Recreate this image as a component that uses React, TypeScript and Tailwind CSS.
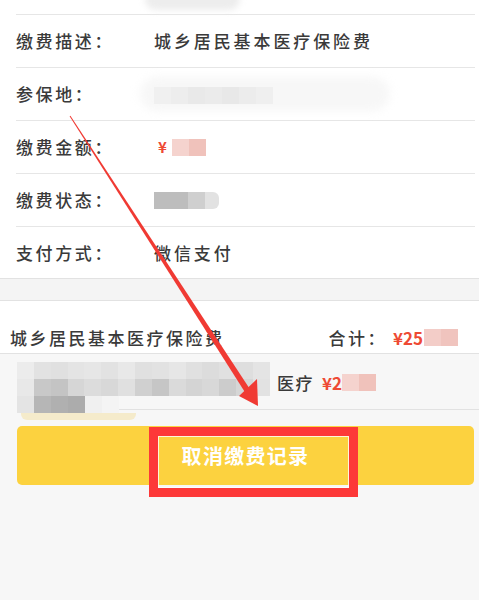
import React from 'react';

const font = { fontFamily: '"Noto Sans CJK SC", "Noto Sans", sans-serif' };

// blurred mosaic cells used to hide personal data in the screenshot
const itemMosaic = [
  ['#ececec', '#e2e2e2', '#e0e0e0', '#e4e4e4', '#e6e6e6', '#e2e2e2', '#e8e8e8', '#e0e0e0', '#e2e2e2', '#e6e6e6', '#e0e0e0', '#dcdcdc', '#e0e0e0', '#dedede', '#e4e4e4'],
  ['#e8e8e8', '#c8c8c8', '#c4c4c4', '#d6d6d6', '#dcdcdc', '#d8d8d8', '#e0e0e0', '#d0d0d0', '#c6c6c6', '#dadada', '#d4d4d4', '#d8d8d8', '#cccccc', '#d6d6d6', '#e2e2e2'],
  ['#e4e4e4', '#b6b6b6', '#b0b0b0', '#acacac', '#f0f0f0', '#f4f4f4'],
];

function Cells({ colors, className = '' }: { colors: string[]; className?: string }) {
  return (
    <div className={`flex ${className}`}>
      {colors.map((c, i) => (
        <div key={i} className="h-[17px] w-[17px]" style={{ backgroundColor: c }} />
      ))}
    </div>
  );
}

function Row({ label, children, last }: { label: string; children: React.ReactNode; last?: boolean }) {
  return (
    <div className={`flex items-center ${last ? 'h-[51px]' : 'h-[53px] border-b border-[#e6e6e6]'}`}>
      <span className="w-[138px] text-[17px] font-medium tracking-[2.6px] text-[#3a3a3a]">{label}</span>
      {children}
    </div>
  );
}

function Arrow() {
  return (
    <svg className="pointer-events-none absolute left-0 top-0" width="479" height="600" viewBox="0 0 479 600">
      <polygon points="69.6,116.3 70.4,115.7 249.5,388.4 244.5,391.6" fill="#f03a33" />
      <polygon points="239,396 257,379 258,406" fill="#f03a33" />
    </svg>
  );
}

export default function App() {
  return (
    <div className="relative h-[600px] w-[479px] overflow-hidden bg-[#f7f7f7]" style={font}>
      {/* detail list */}
      <div className="relative border-b border-[#e2e2e2] bg-white pl-4 pr-[4px]">
        <div className="absolute left-[145px] top-[-12px] h-[22px] w-[95px] rounded-full bg-[#ededed] blur-[3px]" />
        <div className="h-[15px] border-b border-[#e6e6e6]" />
        <Row label="缴费描述：">
          <span className="text-[17px] font-medium tracking-[2.9px] text-[#3a3a3a]">城乡居民基本医疗保险费</span>
        </Row>
        <Row label="参保地：">
          <div className="relative">
            <div className="absolute left-[-14px] top-[-8px] h-[34px] w-[250px] rounded-full bg-[#f7f7f7] blur-[4px]" />
            <Cells className="relative mt-[2px] rounded-[3px]" colors={['#f0f0f0', '#ededed', '#e9e9e9', '#ebebeb', '#e8e8e8', '#ececec', '#efefef']} />
          </div>
        </Row>
        <Row label="缴费金额：">
          <span className="ml-[4px] text-[15px] font-bold text-[#ee4a34]">¥</span>
          <Cells className="ml-[5px]" colors={['#f5d3ce', '#f0c2bb']} />
        </Row>
        <Row label="缴费状态：">
          <div className="flex">
            <div className="h-[17px] w-[34px] bg-[#bdbdbd]" />
            <div className="h-[17px] w-[17px] bg-[#cfcfcf]" />
            <div className="h-[17px] w-[14px] rounded-r-[6px] bg-[#e2e2e2]" />
          </div>
        </Row>
        <Row label="支付方式：" last>
          <span className="text-[17px] font-medium tracking-[2.9px] text-[#3a3a3a]">微信支付</span>
        </Row>
      </div>

      <div className="h-[21px] bg-[#f4f4f4]" />

      {/* order summary */}
      <div className="flex h-[54px] items-end border-y border-[#e2e2e2] bg-white pb-[3px] pl-[10px]">
        <span className="text-[17px] font-medium tracking-[2.5px] text-[#3a3a3a]">城乡居民基本医疗保险费</span>
        <span className="ml-[104px] text-[17px] font-medium tracking-[2.5px] text-[#3a3a3a]">合计：</span>
        <span className="ml-[6px] text-[17px] font-bold text-[#ee4a34]">¥25</span>
        <Cells className="mb-[4px] ml-[1px]" colors={['#f3cdc8', '#f0c4be']} />
      </div>

      <div className="ml-[17px] flex h-[56px] items-start border-b border-[#e2e2e2] pt-[8px]">
        <div className="relative w-[253px]">
          {itemMosaic.map((row, i) => (
            <Cells key={i} colors={row} className={i === 0 ? 'rounded-tr-[10px]' : ''} />
          ))}
          <div className="absolute left-[4px] top-[51px] h-[7px] w-[115px] rounded-b-[6px] bg-[#f5ebcb]" />
        </div>
        <span className="ml-[7px] mt-[8px] text-[17px] font-medium tracking-[1.5px] text-[#3a3a3a]">医疗</span>
        <span className="ml-[8px] mt-[8px] text-[17px] font-bold text-[#ee4a34]">¥2</span>
        <Cells className="mt-[12px]" colors={['#f5d3ce', '#f0c2bb']} />
      </div>

      <button className="ml-[17px] mt-[16px] flex h-[59px] w-[457px] items-center justify-center rounded-[5px] bg-[#fcd23f] text-[20px] font-bold tracking-[1.3px] text-white">
        取消缴费记录
      </button>

      {/* annotation: red frame and arrow */}
      <div className="absolute left-[149px] top-[427px] h-[70px] w-[209px] border-[9px] border-[#fd3838]">
        <div className="h-full w-full border border-white/80" />
      </div>
      <Arrow />
    </div>
  );
}
